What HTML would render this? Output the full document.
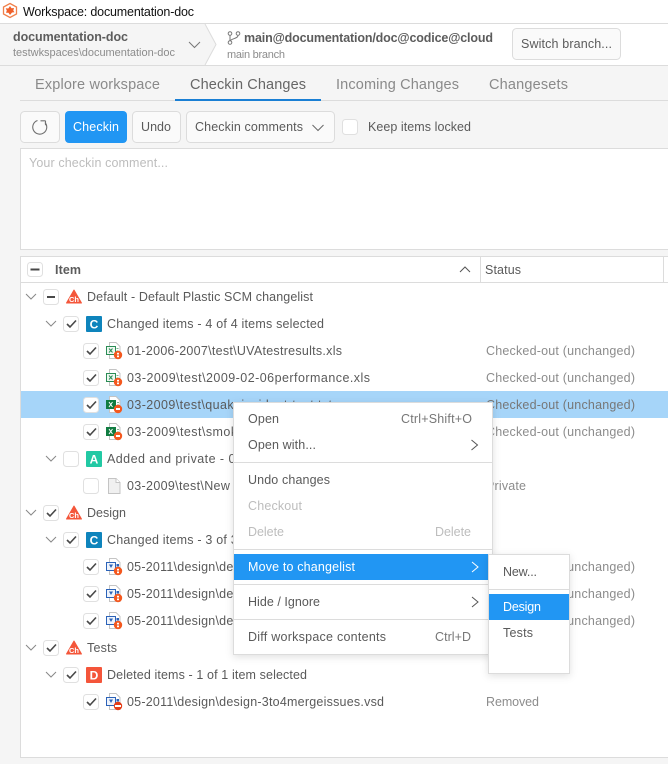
<!DOCTYPE html>
<html><head><meta charset="utf-8"><title>Workspace: documentation-doc</title>
<style>
html,body{margin:0;padding:0;background:#f5f5f5;overflow:hidden}
svg{display:block;font-family:"Liberation Sans",sans-serif}
text{white-space:pre}
.r{font-size:12.5px;fill:#5a5a5a}
.s{font-size:12.5px;fill:#8c8c8c}
.m{font-size:12.5px;fill:#5a5a5a}
.d{font-size:12.5px;fill:#bdbdbd}
.t{font-size:14.5px;fill:#8a8a8a}
.b{font-size:12.5px;fill:#5a5a5a}
.bx{fill:#fff;stroke:#e0e0e0}
.ck{fill:none;stroke:#484848;stroke-width:1.6}
.ch{fill:none;stroke:#888;stroke-width:1}
.bd{font-size:12px;font-weight:bold;fill:#fff;text-anchor:middle}
.c{font-size:7.5px;font-weight:bold;fill:#fff;text-anchor:middle}
</style></head><body>
<svg width="668" height="764" viewBox="0 0 668 764" xmlns="http://www.w3.org/2000/svg">
<rect width="668" height="764" fill="#f5f5f5"/>
<!-- title -->
<rect width="668" height="23" fill="#fff"/>
<rect y="23" width="668" height="1" fill="#dcdcdc"/>
<polygon points="10,3.500 16.500,7 16.500,14 10,17.500 3.500,14 3.500,7" fill="#fff" stroke="#f0804a" stroke-width="1.300"/>
<polygon points="10,6 11.500,8.300 14,8 13.300,10.500 14.500,12.300 12,12.500 10,15 8.500,12.800 6,12.800 6.800,10.500 5.700,8.300 8.300,8.500" fill="#f0602a"/>
<text x="23" y="16" font-size="12.5" fill="#111" textLength="171">Workspace: documentation-doc</text>
<!-- breadcrumb -->
<rect y="24" width="668" height="41" fill="#fff"/>
<polygon points="0,24 205,24 216,44.500 205,65 0,65" fill="#f5f5f5"/>
<polyline points="205,24 216,44.500 205,65" fill="none" stroke="#dcdcdc"/>
<rect y="65" width="668" height="1" fill="#dcdcdc"/>
<text x="13" y="41" font-size="12.5" font-weight="bold" fill="#5c5c5c" textLength="115">documentation-doc</text>
<text x="13" y="56" font-size="11" fill="#8c8c8c" textLength="162">testwkspaces\documentation-doc</text>
<polyline points="189,42 194.500,47.500 200,42" class="ch" style="stroke:#777"/>
<g fill="none" stroke="#777" stroke-width="1">
<circle cx="230" cy="33.500" r="1.800"/><circle cx="238" cy="33.500" r="1.800"/><circle cx="230" cy="42.500" r="1.800"/>
<path d="M230 35.500v5M238 35.500c0 3-6 3-7.500 5"/>
</g>
<text x="244" y="42" font-size="12.5" font-weight="bold" fill="#5c5c5c" textLength="249">main@documentation/doc@codice@cloud</text>
<text x="227" y="58" font-size="11" fill="#8c8c8c" textLength="58">main branch</text>
<rect x="512.500" y="28.500" width="108" height="31" rx="4" fill="#fafafa" stroke="#dcdcdc"/>
<text x="521" y="48" class="b" textLength="91">Switch branch...</text>
<!-- tabs -->
<text x="35" y="89" class="t" textLength="125">Explore workspace</text>
<text x="190" y="89" class="t" style="fill:#666" textLength="116">Checkin Changes</text>
<text x="336" y="89" class="t" textLength="123">Incoming Changes</text>
<text x="489" y="89" class="t" textLength="79">Changesets</text>
<rect x="20" y="100" width="648" height="1" fill="#dcdcdc"/>
<rect x="175" y="99" width="146" height="2" fill="#1a7fd4"/>
<!-- toolbar -->
<rect x="20.500" y="111.500" width="39" height="31" rx="4" fill="#fafafa" stroke="#dcdcdc"/>
<path d="M45 122.500A7 7 0 1 1 37.500 120.500" fill="none" stroke="#707070" stroke-width="1.100"/>
<path d="M40.500 120.800h5M45.500 120.800v4.400" fill="none" stroke="#707070" stroke-width="1.100"/>
<rect x="65" y="111" width="62" height="32" rx="4" fill="#2196f3"/>
<text x="73" y="131" class="b" style="fill:#fff" textLength="46">Checkin</text>
<rect x="132.500" y="111.500" width="48" height="31" rx="4" fill="#fafafa" stroke="#dcdcdc"/>
<text x="141" y="131" class="b" textLength="30">Undo</text>
<rect x="186.500" y="111.500" width="148" height="31" rx="4" fill="#fafafa" stroke="#dcdcdc"/>
<text x="195" y="131" class="b" textLength="108">Checkin comments</text>
<polyline points="312.500,125 318,130.500 323.500,125" class="ch" style="stroke:#666"/>
<rect x="342.500" y="119.500" width="15" height="15" rx="3" class="bx"/>
<text x="368" y="131" class="b" textLength="103">Keep items locked</text>
<!-- comment -->
<rect x="20" y="148" width="648" height="102" fill="#fff"/>
<rect x="20" y="148" width="648" height="1" fill="#dcdcdc"/>
<rect x="20" y="249" width="648" height="1" fill="#dcdcdc"/>
<rect x="20" y="148" width="1" height="102" fill="#dcdcdc"/>
<text x="29" y="167" font-size="12.5" fill="#bdbdbd" textLength="139">Your checkin comment...</text>
<!-- list -->
<rect x="20" y="256" width="648" height="502" fill="#fff"/>
<rect x="20" y="256" width="648" height="1" fill="#dcdcdc"/>
<rect x="20" y="282" width="648" height="1" fill="#dcdcdc"/>
<rect x="20" y="256" width="1" height="502" fill="#dcdcdc"/>
<rect x="20" y="757" width="648" height="1" fill="#dcdcdc"/>
<rect x="480" y="257" width="1" height="25" fill="#dcdcdc"/>
<rect x="663" y="257" width="1" height="25" fill="#dcdcdc"/>
<rect x="27.500" y="262.500" width="15" height="14" rx="3" class="bx"/>
<path d="M30.500 269.500h9" stroke="#484848" stroke-width="2"/>
<text x="55" y="274" font-size="12.5" font-weight="bold" fill="#5c5c5c" textLength="26">Item</text>
<polyline points="460,272 465,267 470,272" class="ch" style="stroke:#555"/>
<text x="485" y="274" class="r" textLength="36">Status</text>

<rect x="21" y="391" width="647" height="27" fill="#a6d5f9"/>

<!-- Default -->
<polyline points="26,294 31,299 36,294" class="ch"/>
<rect x="43.500" y="289.500" width="15" height="15" rx="3" class="bx"/><path d="M47 297h8" stroke="#484848" stroke-width="2"/>
<path d="M74 290L81.500 303H66.500Z" fill="#f4563a" stroke="#f4563a" stroke-width="1" stroke-linejoin="round"/>
<text x="74" y="302" class="c">Ch</text>
<text x="87" y="301" class="r" textLength="226">Default - Default Plastic SCM changelist</text>

<polyline points="46,321 51,326 56,321" class="ch"/>
<rect x="63.500" y="316.500" width="15" height="15" rx="3" class="bx"/><polyline points="67,324 70,327 76,320.500" class="ck"/>
<rect x="86" y="316" width="16" height="16" rx="1" fill="#0e84bc"/><text x="94" y="328.500" class="bd">C</text>
<text x="107" y="328" class="r" textLength="217">Changed items - 4 of 4 items selected</text>

<!-- xls rows -->
<rect x="83.500" y="343.500" width="15" height="15" rx="3" class="bx"/><polyline points="87,351 90,354 96,347.500" class="ck"/>
<g transform="translate(106,342)"><path d="M3.500 .5h6.500l4 4v12H3.500z" fill="#fff" stroke="#c4c4c4"/><rect x=".5" y="4.500" width="9" height="8" fill="#eef7f0" stroke="#2a8c55"/><path d="M3 6.500l3.500 4M6.500 6.500l-3.500 4" stroke="#2a8c55"/><path d="M10.500 6.500h2M10.500 9h2" stroke="#7cb58e"/><circle cx="12" cy="13" r="4.200" fill="#f4581e"/><rect x="11" y="10.800" width="2" height="1.700" fill="#fff"/><rect x="11" y="13.500" width="2" height="1.700" fill="#fff"/></g>
<text x="127" y="355" class="r" textLength="215">01-2006-2007\test\UVAtestresults.xls</text>
<text x="486" y="355" class="s" textLength="149">Checked-out (unchanged)</text>

<rect x="83.500" y="370.500" width="15" height="15" rx="3" class="bx"/><polyline points="87,378 90,381 96,374.500" class="ck"/>
<g transform="translate(106,369)"><path d="M3.500 .5h6.500l4 4v12H3.500z" fill="#fff" stroke="#c4c4c4"/><rect x=".5" y="4.500" width="9" height="8" fill="#eef7f0" stroke="#2a8c55"/><path d="M3 6.500l3.500 4M6.500 6.500l-3.500 4" stroke="#2a8c55"/><path d="M10.500 6.500h2M10.500 9h2" stroke="#7cb58e"/><circle cx="12" cy="13" r="4.200" fill="#f4581e"/><rect x="11" y="10.800" width="2" height="1.700" fill="#fff"/><rect x="11" y="13.500" width="2" height="1.700" fill="#fff"/></g>
<text x="127" y="382" class="r" textLength="243">03-2009\test\2009-02-06performance.xls</text>
<text x="486" y="382" class="s" textLength="149">Checked-out (unchanged)</text>

<rect x="83.500" y="397.500" width="15" height="15" rx="3" class="bx"/><polyline points="87,405 90,408 96,401.500" class="ck"/>
<g transform="translate(106,396)"><path d="M3.500 .5h6.500l4 4v12H3.500z" fill="#fff" stroke="#c4c4c4"/><rect x="0" y="4" width="10" height="9" fill="#107c41"/><path d="M3 6l3.500 5M6.500 6l-3.500 5" stroke="#fff"/><path d="M11 6.500h2M11 9h2" stroke="#7cb58e"/><circle cx="12" cy="13" r="4.200" fill="#f4581e"/><rect x="10" y="12" width="4" height="2" fill="#fff"/></g>
<text x="127" y="409" class="r" textLength="205">03-2009\test\quakeincident-test.txt</text>
<text x="486" y="409" class="s" style="fill:#777" textLength="149">Checked-out (unchanged)</text>

<rect x="83.500" y="424.500" width="15" height="15" rx="3" class="bx"/><polyline points="87,432 90,435 96,428.500" class="ck"/>
<g transform="translate(106,423)"><path d="M3.500 .5h6.500l4 4v12H3.500z" fill="#fff" stroke="#c4c4c4"/><rect x="0" y="4" width="10" height="9" fill="#107c41"/><path d="M3 6l3.500 5M6.500 6l-3.500 5" stroke="#fff"/><path d="M11 6.500h2M11 9h2" stroke="#7cb58e"/><circle cx="12" cy="13" r="4.200" fill="#f4581e"/><rect x="10" y="12" width="4" height="2" fill="#fff"/></g>
<text x="127" y="436" class="r" textLength="160">03-2009\test\smoketest.xls</text>
<text x="486" y="436" class="s" textLength="149">Checked-out (unchanged)</text>

<!-- Added -->
<polyline points="46,456 51,461 56,456" class="ch"/>
<rect x="63.500" y="451.500" width="15" height="15" rx="3" class="bx"/>
<rect x="86" y="451" width="16" height="16" rx="1" fill="#22c9a4"/><text x="94" y="463.500" class="bd">A</text>
<text x="107" y="463" class="r" textLength="245">Added and private - 0 of 1 items selected</text>

<rect x="83.500" y="478.500" width="15" height="15" rx="3" class="bx"/>
<path d="M108.500 478.500h7.500l4 4v11h-11.500z" fill="#f0f0f0" stroke="#c4c4c4"/><path d="M116 478.500v4h4" fill="#fff" stroke="#c4c4c4"/>
<text x="127" y="490" class="r" textLength="212">03-2009\test\New Text Document.txt</text>
<text x="486" y="490" class="s" textLength="40">Private</text>

<!-- Design -->
<polyline points="26,510 31,515 36,510" class="ch"/>
<rect x="43.500" y="505.500" width="15" height="15" rx="3" class="bx"/><polyline points="47,513 50,516 56,509.500" class="ck"/>
<path d="M74 506L81.500 519H66.500Z" fill="#f4563a" stroke="#f4563a" stroke-width="1" stroke-linejoin="round"/>
<text x="74" y="518" class="c">Ch</text>
<text x="87" y="517" class="r" textLength="39">Design</text>

<polyline points="46,537 51,542 56,537" class="ch"/>
<rect x="63.500" y="532.500" width="15" height="15" rx="3" class="bx"/><polyline points="67,540 70,543 76,536.500" class="ck"/>
<rect x="86" y="532" width="16" height="16" rx="1" fill="#0e84bc"/><text x="94" y="544.500" class="bd">C</text>
<text x="107" y="544" class="r" textLength="217">Changed items - 3 of 3 items selected</text>

<rect x="83.500" y="559.500" width="15" height="15" rx="3" class="bx"/><polyline points="87,567 90,570 96,563.500" class="ck"/>
<g transform="translate(106,558)"><path d="M3.500 .5h6.500l4 4v12H3.500z" fill="#fff" stroke="#c4c4c4"/><rect x=".5" y="4.500" width="9" height="8" fill="#eef3fb" stroke="#2b62b8"/><path d="M3 6.500h4l-2 3.500z" fill="#2b62b8"/><rect x="10.500" y="6" width="2.500" height="2.500" fill="#2b62b8"/><circle cx="12" cy="13" r="4.200" fill="#f4581e"/><rect x="11" y="10.800" width="2" height="1.700" fill="#fff"/><rect x="11" y="13.500" width="2" height="1.700" fill="#fff"/></g>
<text x="127" y="571" class="r" textLength="257">05-2011\design\design-3to4mergeissues.vsd</text>
<text x="486" y="571" class="s" textLength="149">Checked-out (unchanged)</text>

<rect x="83.500" y="586.500" width="15" height="15" rx="3" class="bx"/><polyline points="87,594 90,597 96,590.500" class="ck"/>
<g transform="translate(106,585)"><path d="M3.500 .5h6.500l4 4v12H3.500z" fill="#fff" stroke="#c4c4c4"/><rect x=".5" y="4.500" width="9" height="8" fill="#eef3fb" stroke="#2b62b8"/><path d="M3 6.500h4l-2 3.500z" fill="#2b62b8"/><rect x="10.500" y="6" width="2.500" height="2.500" fill="#2b62b8"/><circle cx="12" cy="13" r="4.200" fill="#f4581e"/><rect x="11" y="10.800" width="2" height="1.700" fill="#fff"/><rect x="11" y="13.500" width="2" height="1.700" fill="#fff"/></g>
<text x="127" y="598" class="r" textLength="257">05-2011\design\design-2to3mergeissues.vsd</text>
<text x="486" y="598" class="s" textLength="149">Checked-out (unchanged)</text>

<rect x="83.500" y="613.500" width="15" height="15" rx="3" class="bx"/><polyline points="87,621 90,624 96,617.500" class="ck"/>
<g transform="translate(106,612)"><path d="M3.500 .5h6.500l4 4v12H3.500z" fill="#fff" stroke="#c4c4c4"/><rect x=".5" y="4.500" width="9" height="8" fill="#eef3fb" stroke="#2b62b8"/><path d="M3 6.500h4l-2 3.500z" fill="#2b62b8"/><rect x="10.500" y="6" width="2.500" height="2.500" fill="#2b62b8"/><circle cx="12" cy="13" r="4.200" fill="#f4581e"/><rect x="11" y="10.800" width="2" height="1.700" fill="#fff"/><rect x="11" y="13.500" width="2" height="1.700" fill="#fff"/></g>
<text x="127" y="625" class="r" textLength="257">05-2011\design\design-1to2mergeissues.vsd</text>
<text x="486" y="625" class="s" textLength="149">Checked-out (unchanged)</text>

<!-- Tests -->
<polyline points="26,645 31,650 36,645" class="ch"/>
<rect x="43.500" y="640.500" width="15" height="15" rx="3" class="bx"/><polyline points="47,648 50,651 56,644.500" class="ck"/>
<path d="M74 641L81.500 654H66.500Z" fill="#f4563a" stroke="#f4563a" stroke-width="1" stroke-linejoin="round"/>
<text x="74" y="653" class="c">Ch</text>
<text x="87" y="652" class="r" textLength="30">Tests</text>

<polyline points="46,672 51,677 56,672" class="ch"/>
<rect x="63.500" y="667.500" width="15" height="15" rx="3" class="bx"/><polyline points="67,675 70,678 76,671.500" class="ck"/>
<rect x="86" y="667" width="16" height="16" rx="1" fill="#f4553a"/><text x="94" y="679.500" class="bd">D</text>
<text x="107" y="679" class="r" textLength="200">Deleted items - 1 of 1 item selected</text>

<rect x="83.500" y="694.500" width="15" height="15" rx="3" class="bx"/><polyline points="87,702 90,705 96,698.500" class="ck"/>
<g transform="translate(106,693)"><path d="M3.500 .5h6.500l4 4v12H3.500z" fill="#fff" stroke="#c4c4c4"/><rect x=".5" y="4.500" width="9" height="8" fill="#eef3fb" stroke="#2b62b8"/><path d="M3 6.500h4l-2 3.500z" fill="#2b62b8"/><rect x="10.500" y="6" width="2.500" height="2.500" fill="#2b62b8"/><circle cx="12" cy="13" r="4.200" fill="#e53c16"/><rect x="9" y="12" width="6" height="2" fill="#fff"/></g>
<text x="127" y="706" class="r" textLength="257">05-2011\design\design-3to4mergeissues.vsd</text>
<text x="486" y="706" class="s" textLength="53">Removed</text>

<!-- context menu -->
<defs><filter id="sh" x="-10%" y="-10%" width="120%" height="120%"><feDropShadow dx="0" dy="2" stdDeviation="4" flood-color="#000" flood-opacity=".12"/></filter></defs>
<rect x="233.500" y="402.500" width="259" height="252" fill="#fff" stroke="#dcdcdc" filter="url(#sh)"/>
<text x="248" y="423" class="m" textLength="31">Open</text>
<text x="401" y="423" class="s" style="fill:#777" textLength="71">Ctrl+Shift+O</text>
<text x="248" y="449" class="m" textLength="68">Open with...</text>
<polyline points="471.500,440 477.500,445 471.500,450" class="ch" style="stroke:#555"/>
<rect x="234" y="462" width="258" height="1" fill="#dcdcdc"/>
<text x="248" y="484" class="m" textLength="82">Undo changes</text>
<text x="248" y="510" class="d" textLength="54">Checkout</text>
<text x="248" y="536" class="d" textLength="36">Delete</text>
<text x="435" y="536" class="d" textLength="36">Delete</text>
<rect x="234" y="549" width="258" height="1" fill="#dcdcdc"/>
<rect x="234" y="554" width="254" height="26" fill="#2196f3"/>
<text x="248" y="571" class="m" style="fill:#fff" textLength="107">Move to changelist</text>
<polyline points="472,562 478,567 472,572" class="ch" style="stroke:#fff"/>
<rect x="234" y="584" width="258" height="1" fill="#dcdcdc"/>
<text x="248" y="606" class="m" textLength="72">Hide / Ignore</text>
<polyline points="472,597 478,602 472,607" class="ch" style="stroke:#555"/>
<rect x="234" y="619" width="258" height="1" fill="#dcdcdc"/>
<text x="248" y="641" class="m" textLength="138">Diff workspace contents</text>
<text x="435" y="641" class="s" style="fill:#777" textLength="36">Ctrl+D</text>

<!-- submenu -->
<rect x="488.500" y="554.500" width="81" height="119" fill="#fff" stroke="#dcdcdc" filter="url(#sh)"/>
<text x="503" y="576" class="m" textLength="34">New...</text>
<rect x="489" y="589" width="80" height="1" fill="#dcdcdc"/>
<rect x="489" y="594" width="80" height="26" fill="#2196f3"/>
<text x="503" y="611" class="m" style="fill:#fff" textLength="38">Design</text>
<text x="503" y="637" class="m" textLength="30">Tests</text>
</svg>
</body></html>
